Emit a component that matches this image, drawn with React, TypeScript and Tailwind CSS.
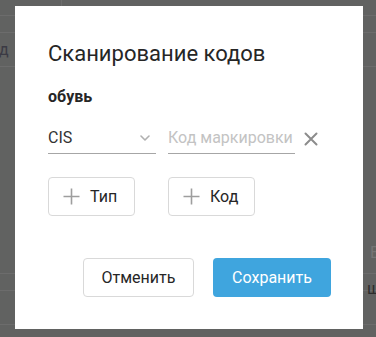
import React from "react";

function Chevron() {
  return (
    <svg width="10" height="6" viewBox="0 0 10 6" fill="none">
      <path d="M1 1l4 4 4-4" stroke="#b0b0b0" strokeWidth="1.6" strokeLinecap="round" strokeLinejoin="round" />
    </svg>
  );
}

function Cross() {
  return (
    <svg width="14" height="14" viewBox="0 0 14 14" fill="none">
      <path d="M1.5 1.5l11 11M12.5 1.5l-11 11" stroke="#8c8c8c" strokeWidth="2" strokeLinecap="round" />
    </svg>
  );
}

function Plus() {
  return (
    <svg width="17" height="17" viewBox="0 0 17 17" fill="none">
      <path d="M8.5 0.5v16M0.5 8.5h16" stroke="#9e9e9e" strokeWidth="1.6" />
    </svg>
  );
}

export default function App() {
  return (
    <div
      className="relative w-[376px] h-[337px] overflow-hidden bg-[#616261]"
      style={{ fontFamily: "Roboto, 'Noto Sans', sans-serif" }}
    >
      {/* faint background page */}
      <div className="flex flex-col w-full h-full">
        <div className="h-[16px] border-b border-[#6c6c6c] flex">
          <div className="w-[62px] border-r border-[#6c6c6c]" />
        </div>
        <div className="h-[17px] border-b border-[#6c6c6c]" />
        <div className="h-[34px] border-b border-[#6c6c6c] flex items-center">
          <span className="ml-[-1px] text-[16px] text-[#3b3a44]">д</span>
        </div>
        <div className="flex-1 relative flex flex-col justify-end">
          <div className="flex justify-end pb-[8px]">
            <span className="mr-[-3px] text-[16px] text-[#757575]">Е</span>
          </div>
        </div>
        <div className="h-[18px] border-t border-b border-[#6c6c6c]" />
        <div className="h-[34px] border-b border-[#6c6c6c] flex items-start justify-end">
          <span className="mt-[-14px] mr-[-4px] text-[16px] text-[#2d2d2d]">ш</span>
        </div>
        <div className="h-[12px]" />
      </div>

      {/* modal */}
      <div className="absolute left-[15px] top-[6px] w-[348px] h-[323px] bg-white pl-[33px] pr-[32px] pt-[35px] flex flex-col">
        <div className="text-[22px] leading-[26px] text-[#262626]">Сканирование кодов</div>
        <div className="mt-[20px] text-[16px] leading-[20px] font-bold text-[#262626]">обувь</div>

        <div className="mt-[15px] flex items-center">
          <div className="w-[108px] h-[32px] border-b border-[#a6a6a6] flex items-center justify-between pr-[6px]">
            <span className="text-[16px] leading-[24px] text-[#333333]">CIS</span>
            <Chevron />
          </div>
          <div className="ml-[12px] w-[127px] h-[32px] border-b border-[#a6a6a6] flex items-center">
            <span className="text-[16px] leading-[24px] text-[#c3c3c3] whitespace-nowrap">Код маркировки</span>
          </div>
          <div className="ml-[9px] pt-[1px]">
            <Cross />
          </div>
        </div>

        <div className="mt-[23px] flex gap-[33px]">
          <button className="w-[87px] h-[39px] border border-[#d9d9d9] rounded-[4px] flex items-center gap-[10px] pl-[14px] text-[16px] text-[#262626]">
            <Plus />
            <span>Тип</span>
          </button>
          <button className="w-[87px] h-[39px] border border-[#d9d9d9] rounded-[4px] flex items-center gap-[10px] pl-[14px] text-[16px] text-[#262626]">
            <Plus />
            <span>Код</span>
          </button>
        </div>

        <div className="mt-auto mb-[32px] flex justify-end gap-[19px]">
          <button className="w-[111px] h-[39px] border border-[#d9d9d9] rounded-[4px] text-[16px] text-[#262626] bg-white">
            Отменить
          </button>
          <button className="w-[118px] h-[39px] rounded-[4px] text-[16px] text-white bg-[#3fa5de]">
            Сохранить
          </button>
        </div>
      </div>
    </div>
  );
}
